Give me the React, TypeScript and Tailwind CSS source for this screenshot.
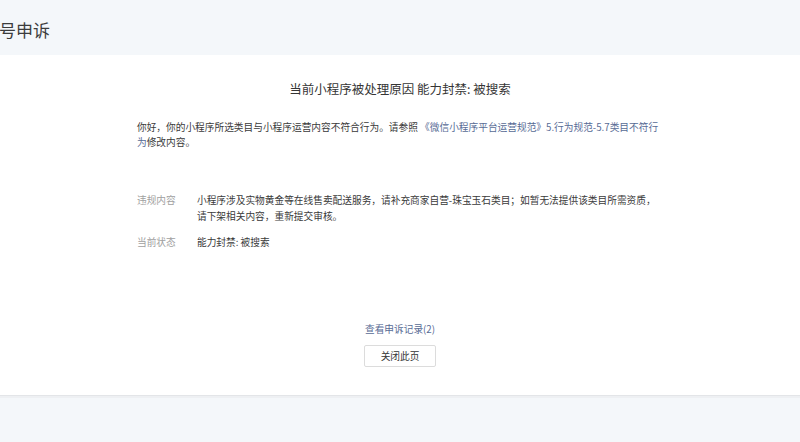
const font = { fontFamily: '"Noto Sans CJK SC", "Noto Sans", sans-serif' };

export default function App() {
  return (
    <div className="w-[800px] h-[442px] bg-[#f4f7fa] overflow-hidden text-[#3a3a3a]" style={font}>
      {/* header band */}
      <div className="h-[55px] flex items-center pt-[3px]">
        <h1 className="text-[17px] leading-none ml-[-1px] text-[#3c3c3c] font-normal">号申诉</h1>
      </div>

      {/* white panel */}
      <div className="bg-white h-[341px] border-b border-[#e3e5e8] shadow-[0_2px_0_#eef0f3] pt-[25px] flex flex-col">
        <div className="text-center text-[12.5px] leading-[18px] text-[#353535]">当前小程序被处理原因 能力封禁: 被搜索</div>

        <p className="mt-[22px] pl-[137px] text-[9.7px] leading-[15px] whitespace-nowrap">
          你好，你的小程序所选类目与小程序运营内容不符合行为。请参照
          <span className="text-[#576b95]"> 《微信小程序平台运营规范》5.行为规范-5.7类目不符行</span>
          <br />
          <span className="text-[#576b95]">为</span>修改内容。
        </p>

        <div className="mt-[42px] pl-[137px] flex flex-col gap-[10px] text-[9.7px] leading-[16px]">
          <div className="flex">
            <span className="w-[60px] shrink-0 text-[#a0a0a0]">违规内容</span>
            <span className="whitespace-nowrap">
              小程序涉及实物黄金等在线售卖配送服务，请补充商家自营-珠宝玉石类目；如暂无法提供该类目所需资质，
              <br />
              请下架相关内容，重新提交审核。
            </span>
          </div>
          <div className="flex">
            <span className="w-[60px] shrink-0 text-[#a0a0a0]">当前状态</span>
            <span>能力封禁: 被搜索</span>
          </div>
        </div>

        <div className="mt-[72px] flex flex-col items-center">
          <a className="text-[9.7px] leading-[15px] text-[#576b95]">查看申诉记录(2)</a>
          <button className="mt-[8px] w-[72px] h-[22px] border border-[#dcdcdc] bg-white text-[9.7px] text-[#353535] rounded-[2px]">
            关闭此页
          </button>
        </div>
      </div>
    </div>
  );
}
